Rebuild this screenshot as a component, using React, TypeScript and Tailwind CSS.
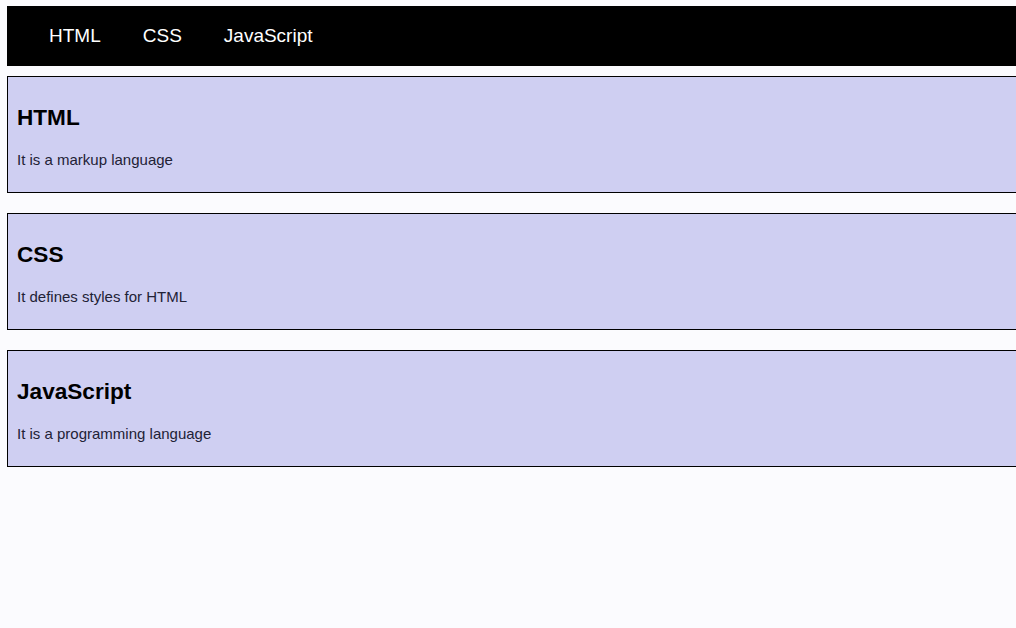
import React from "react";

const items = [
  { title: "HTML", text: "It is a markup language" },
  { title: "CSS", text: "It defines styles for HTML" },
  { title: "JavaScript", text: "It is a programming language" },
];

export default function App() {
  return (
    <div
      className="w-[1016px] h-[628px] overflow-hidden bg-[#fbfbfe] pl-[7px] pt-[6px]"
      style={{ fontFamily: '"Liberation Sans", Arial, sans-serif' }}
    >
      <div className="w-[1030px] flex flex-col">
        <nav className="h-[60px] bg-black flex items-center pl-[21px] pb-[2px]">
          {items.map((i) => (
            <a key={i.title} className="px-[21px] text-[19px] text-white leading-none">
              {i.title}
            </a>
          ))}
        </nav>
        <div className="mt-[10px] flex flex-col gap-[20px]">
          {items.map((i) => (
            <section
              key={i.title}
              className="border border-black bg-[#cfcff2] pl-[9px] pt-[28px] pb-[24px]"
            >
              <h2 className="text-[22.6px] leading-[25px] font-bold text-black">{i.title}</h2>
              <p className="mt-[21px] text-[15px] leading-[17px] text-[#222236]">{i.text}</p>
            </section>
          ))}
        </div>
      </div>
    </div>
  );
}
